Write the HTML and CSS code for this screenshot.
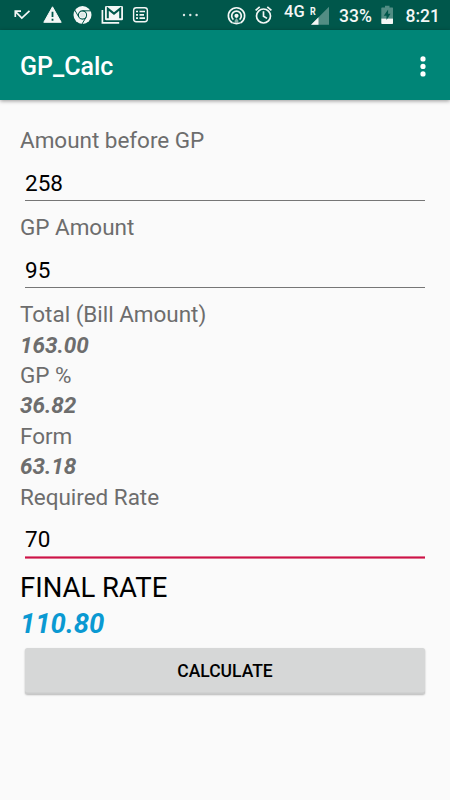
FILE: index.html
```html
<!DOCTYPE html>
<html lang="en">
<head>
<meta charset="utf-8">
<title>GP_Calc</title>
<link rel="stylesheet" href="styles.css">
</head>
<body>
<div class="status-bar">
  <div class="notifications">
    <svg width="160" height="30" viewBox="0 0 160 30" fill="none" stroke="#f4f7f6" stroke-width="1.7">
      <path d="M15.3 17V11.2H21M15.8 11.8L21.8 18L29.5 10.8"/>
      <path d="M52.5 6.8L61.2 22.3H43.8Z" fill="#f4f7f6" stroke-width="1" stroke-linejoin="round"/>
      <path d="M52.5 11.8V17M52.5 18.7V20.7" stroke="#00574b" stroke-width="1.8"/>
      <circle cx="82.5" cy="15" r="9" fill="#f4f7f6" stroke="none"/>
      <path d="M82.5 10.8H90.7M78.8 17.1L74.8 10.1M86.2 17.1L82 24" stroke="#00574b" stroke-width="1"/>
      <circle cx="82.5" cy="15" r="4.1" stroke="#00574b" stroke-width="1.1"/>
      <circle cx="82.5" cy="15" r="2.5" fill="#dce8e6" stroke="none"/>
      <path d="M102.4 10V22.8H119.2"/>
      <rect x="105" y="6" width="18" height="14.2" rx="1.2" fill="#f4f7f6" stroke="none"/>
      <path d="M107.8 18.3V8.6L114 13.6L120.2 8.6V18.3" stroke="#00574b" stroke-width="2"/>
      <rect x="133.6" y="7.7" width="13.8" height="14" rx="2.7" stroke-width="1.4"/>
      <path d="M136 11.5H138M139.5 11.5H145M136 14.8H138M139.5 14.8H144M136 18.2H138M139.5 18.2H145" stroke-width="1.7"/>
    </svg>
  </div>
  <svg class="more" width="18" height="30" viewBox="0 0 18 30" fill="#dce8e6">
    <circle cx="2" cy="15" r="1.2"/><circle cx="8.3" cy="15" r="1.2"/><circle cx="14.6" cy="15" r="1.2"/>
  </svg>
  <div class="system">
    <svg width="50" height="30" viewBox="0 0 50 30" fill="none" stroke="#f4f7f6" stroke-width="1.7">
      <path d="M5.2 22.7A8.1 8.1 0 1 1 13.8 22.7M6.4 19.6A4.8 4.8 0 1 1 12.6 19.6"/>
      <circle cx="9.5" cy="15.8" r="2.1" fill="#f4f7f6" stroke="none"/>
      <path d="M5.2 22.7Q9.5 24.7 13.8 22.7" stroke-width="1.4"/>
      <path d="M7.8 20.4L9.5 18L11.2 20.4L11.6 23.2H7.4Z" fill="#f4f7f6" fill-opacity=".55" stroke="none"/>
      <circle cx="36.5" cy="16" r="7"/>
      <path d="M28.6 10.3L32.7 6.9M44.4 10.3L40.3 6.9M36.5 11.3V16.2L40 18.4"/>
    </svg>
    <span class="network">4G</span>
    <span class="roaming">R</span>
    <svg class="signal" width="19" height="30" viewBox="0 0 19 30">
      <path d="M0 24.7L18 6.7V24.7Z" fill="#528d84"/>
      <path d="M0 24.7L7.5 17.2V24.7Z" fill="#f4f7f6"/>
    </svg>
    <span class="percent">33%</span>
    <svg class="battery" width="13" height="30" viewBox="0 0 13 30">
      <path d="M1 7.5H4V5.8H8.5V7.5H11.5Q12 7.5 12 8.2V18.5H.3V8.2Q.3 7.5 1 7.5Z" fill="#528d84"/>
      <path d="M.3 18.5H12V23.3Q12 24 11.3 24H1Q.3 24 .3 23.3Z" fill="#f4f7f6"/>
      <path d="M7.1 9.5L2.8 15.7H5.5V20L9.5 13.8H7.1Z" fill="#00574b"/>
    </svg>
    <span class="clock">8:21</span>
  </div>
</div>
<header class="app-bar">
  <h1>GP_Calc</h1>
  <svg width="6" height="22" viewBox="0 0 6 22" fill="#fff">
    <circle cx="3" cy="2.9" r="2.6"/><circle cx="3" cy="10.4" r="2.6"/><circle cx="3" cy="17.9" r="2.6"/>
  </svg>
</header>
<main class="form">
  <div class="label">Amount before GP</div>
  <div class="field"><div class="entry">258</div></div>
  <div class="label">GP Amount</div>
  <div class="field"><div class="entry">95</div></div>
  <div class="label">Total (Bill Amount)</div>
  <div class="result">163.00</div>
  <div class="label">GP %</div>
  <div class="result">36.82</div>
  <div class="label">Form</div>
  <div class="result">63.18</div>
  <div class="label">Required Rate</div>
  <div class="field"><div class="entry focused">70</div></div>
  <div class="final-label">FINAL RATE</div>
  <div class="final-value">110.80</div>
  <button class="calculate" type="button">CALCULATE</button>
</main>
</body>
</html>
```

FILE: styles.css
```css
* { box-sizing: border-box; }
body {
  margin: 0;
  height: 800px;
  overflow: hidden;
  background: #fafafa;
  font-family: Roboto, sans-serif;
}
svg { display: block; flex: none; }
.status-bar {
  display: flex;
  height: 30px;
  background: #00574b;
  color: #f4f7f6;
}
.notifications { width: 160px; }
.more { margin-left: 22px; }
.system { display: flex; margin-left: 27px; line-height: 30px; }
.system span { flex: none; white-space: nowrap; }
.network { width: 25.5px; margin-left: 7px; font-size: 16.5px; font-weight: 500; line-height: 23px; }
.roaming { width: 1.5px; font-size: 10.5px; font-weight: 700; line-height: 23px; transform: scaleX(.85); transform-origin: left; }
.percent { width: 33px; margin-left: 9px; font-size: 17.5px; font-weight: 500; line-height: 32px; }
.battery { margin-left: 9px; }
.clock { margin-left: 11.5px; font-size: 17.5px; font-weight: 500; line-height: 32px; }
.app-bar {
  display: flex;
  align-items: center;
  justify-content: space-between;
  height: 70px;
  padding: 3px 24.5px 0 20px;
  background: #008577;
  box-shadow: 0 1px 4px rgba(0, 0, 0, .4);
  color: #fff;
}
.app-bar h1 { margin: 0; font-size: 25px; font-weight: 500; line-height: 30px; }
.form { padding: 25.2px 20px 0; }
.label, .result { height: 30.4px; font-size: 22.5px; line-height: 30.4px; letter-spacing: -.03px; color: #6d6d6d; }
.result { font-weight: 700; font-style: italic; }
.field { height: 56.6px; padding: 12.4px 5px 0; }
.entry {
  height: 33px;
  border-bottom: 1px solid #767676;
  font-size: 22.5px;
  line-height: 30.4px;
  color: #000;
}
.entry.focused {
  height: 33.6px;
  border-bottom: 1px solid #cc1249;
  box-shadow: 0 1px 0 #e0738f, inset 0 -1px 0 #e0738f;
}
.final-label, .final-value { height: 36.6px; padding-top: 1.2px; font-size: 27.5px; line-height: 36.6px; color: #000; }
.final-value { font-weight: 700; font-style: italic; color: #0a99d2; }
.calculate {
  display: block;
  width: 400px;
  height: 46px;
  margin: 6px 5px 0;
  padding: 0;
  border: 0;
  border-radius: 2.5px;
  background: #d6d7d7;
  box-shadow: inset 0 -1.5px 0 #cacbcb, 0 1px 2px rgba(0, 0, 0, .28);
  font: 500 17.5px/47px Roboto, sans-serif;
  color: #000;
}
```
